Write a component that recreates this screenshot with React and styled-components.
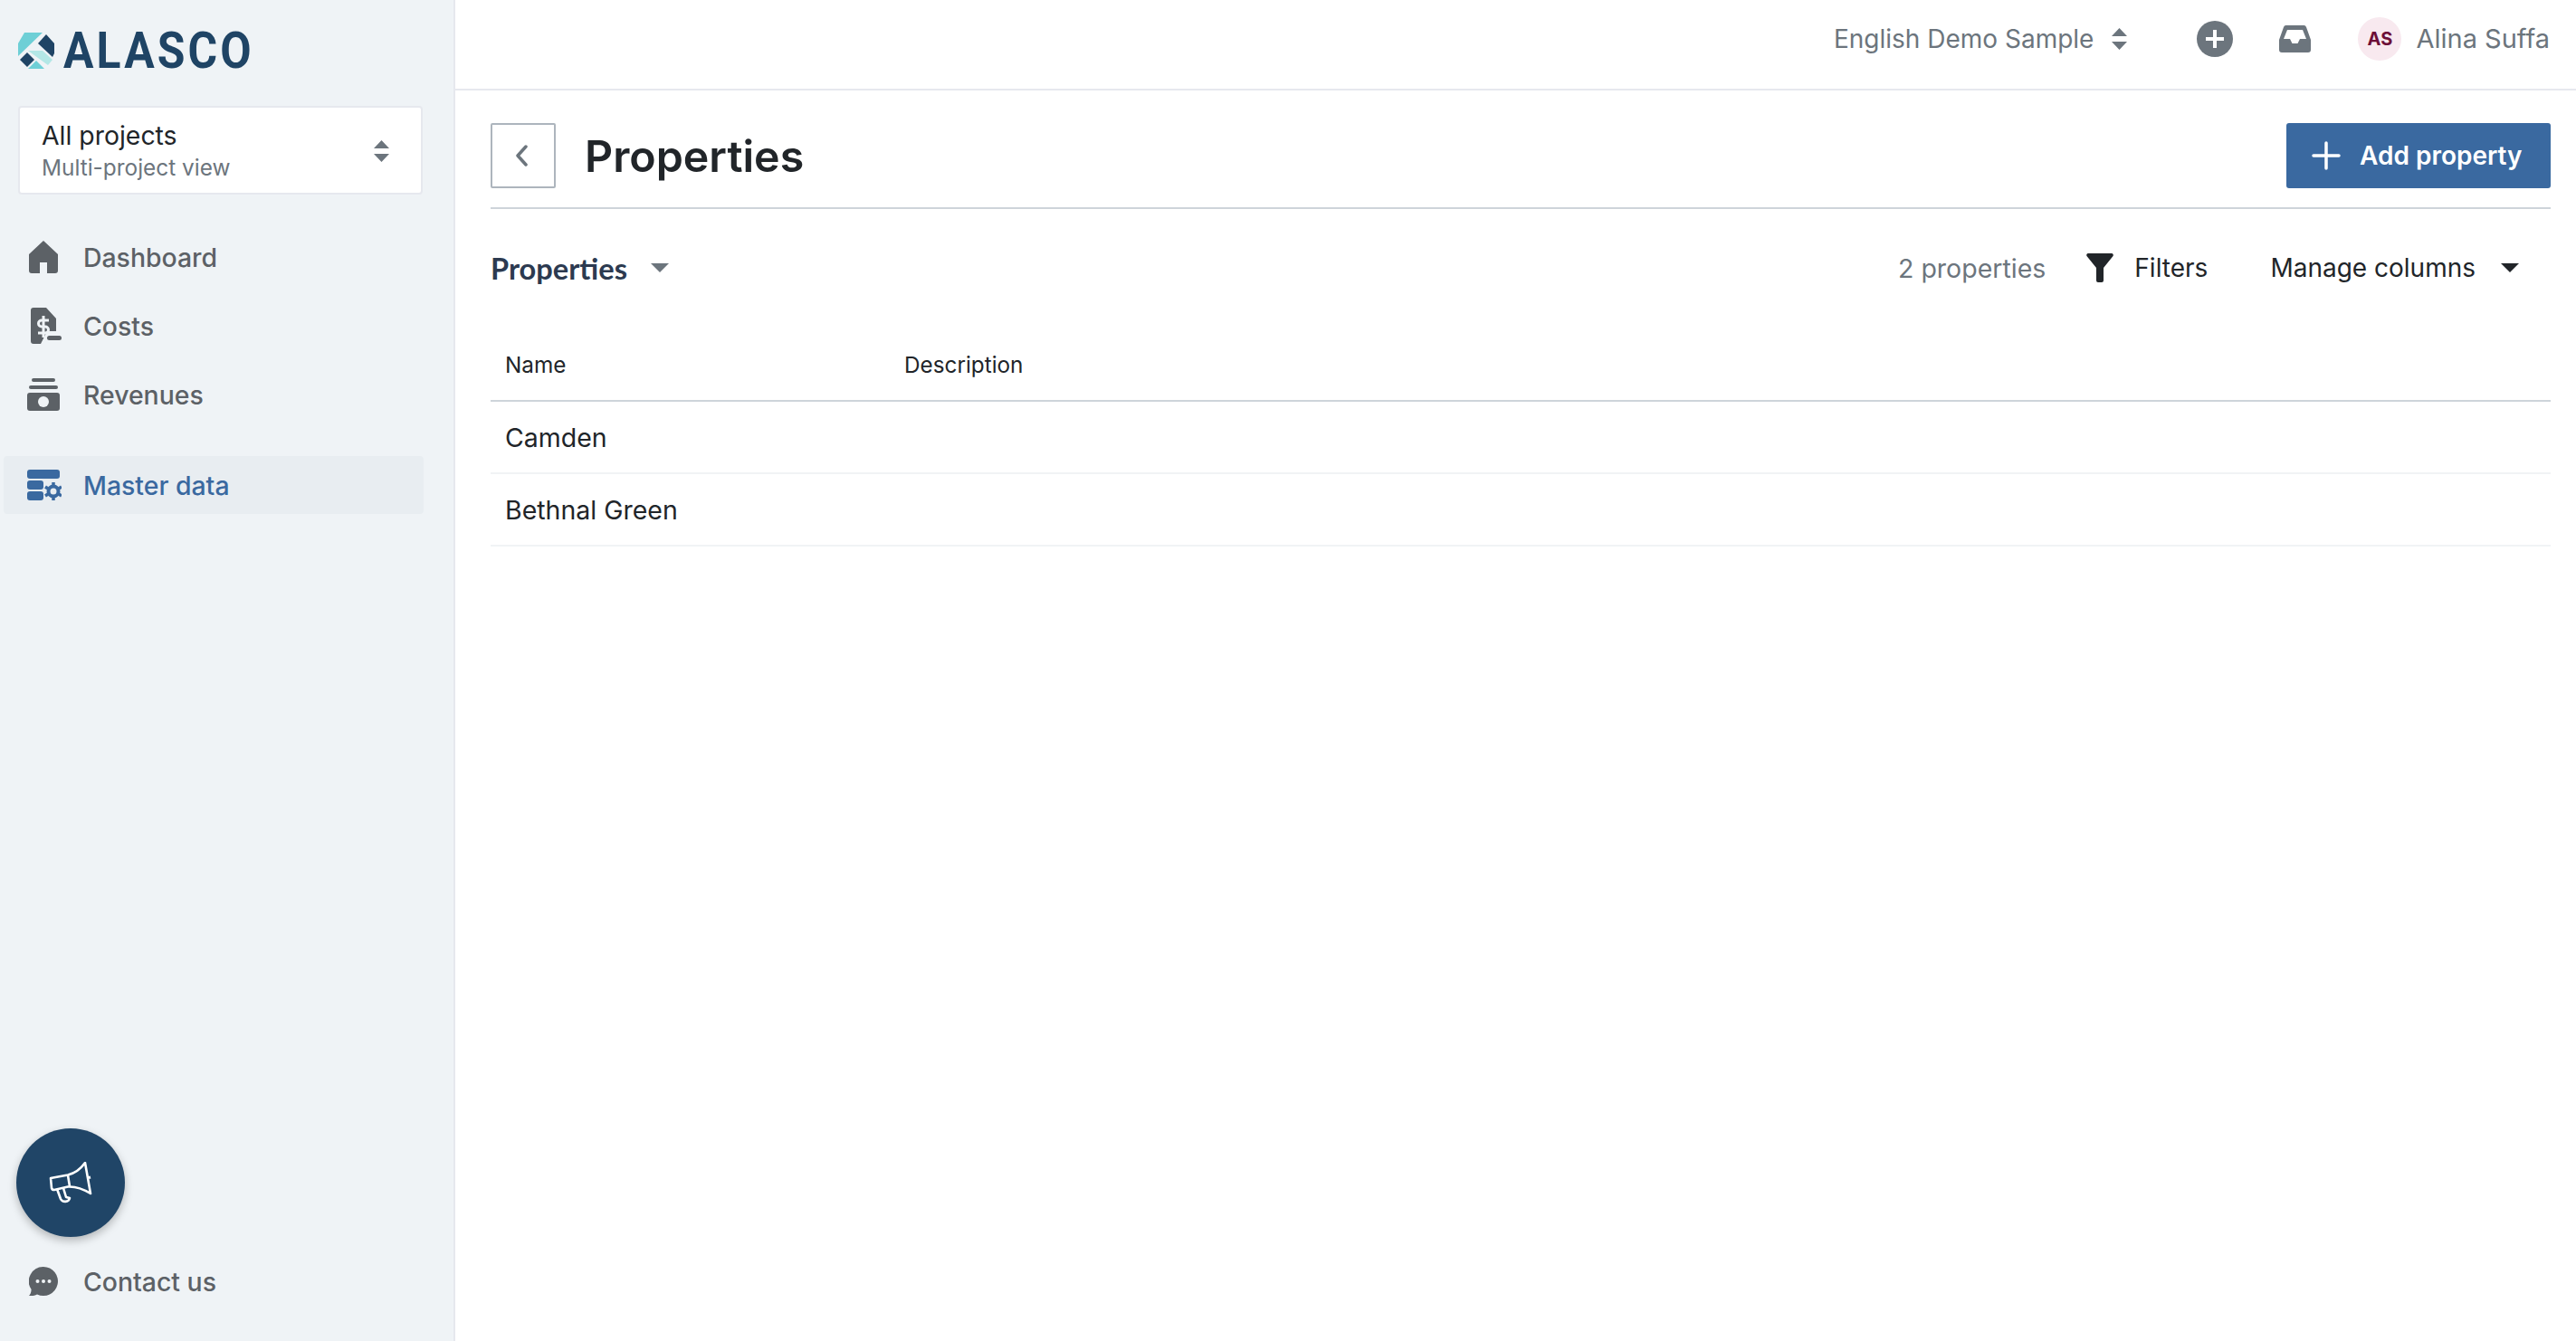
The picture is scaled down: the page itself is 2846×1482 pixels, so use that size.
import React from "react";
import styled, { createGlobalStyle } from "styled-components";

const GlobalStyle = createGlobalStyle`
  html, body {
    margin: 0;
    padding: 0;
    background: #fff;
    font-family: Inter, "Liberation Sans", sans-serif;
  }
  * {
    box-sizing: border-box;
  }
`;

const Page = styled.div`
  display: flex;
  height: 1482px;
  overflow: hidden;
`;

const Sidebar = styled.aside`
  width: 503px;
  flex-shrink: 0;
  display: flex;
  flex-direction: column;
  padding: 36px 0 28px;
  background: #eff3f6;
  border-right: 2px solid #e6e8ee;
`;

const LogoRow = styled.div`
  display: flex;
  align-items: center;
  gap: 10px;
  height: 40px;
  padding-left: 20px;
`;

const LogoText = styled.span`
  font-family: Roboto, sans-serif;
  font-size: 56px;
  font-weight: 700;
  letter-spacing: 3.5px;
  line-height: 40px;
  color: #1f4465;
  transform: scaleX(0.89);
  transform-origin: left center;
`;

const ProjectSelect = styled.div`
  display: flex;
  align-items: center;
  justify-content: space-between;
  width: 447px;
  height: 98px;
  margin: 41px 0 0 20px;
  padding: 2px 35px 0 24px;
  background: #fff;
  border: 2px solid #e6e8ee;
  border-radius: 4px;
`;

const ProjectName = styled.div`
  font-size: 28.4px;
  line-height: 36px;
  color: #212529;
`;

const ProjectHint = styled.div`
  font-size: 24.4px;
  line-height: 34px;
  color: #6c757d;
`;

const NavList = styled.nav`
  display: flex;
  flex-direction: column;
  margin-top: ${(p) => p.$top}px;
`;

const NavItem = styled.a`
  display: flex;
  align-items: center;
  width: 464px;
  height: ${(p) => (p.$active ? "64px" : "76px")};
  margin: ${(p) => (p.$active ? "30px 0 0 4px" : "0 0 0 4px")};
  padding-left: 22px;
  border-radius: 4px;
  background: ${(p) => (p.$active ? "#e8edf1" : "transparent")};
  color: ${(p) => (p.$active ? "#3a69a0" : "#5c6166")};
  font-size: 28.4px;
  font-weight: 500;
`;

const NavIcon = styled.span`
  display: flex;
  align-items: center;
  justify-content: center;
  width: 44px;
  margin-right: 22px;
  flex-shrink: 0;
`;

const Spacer = styled.div`
  flex: 1;
`;

const Fab = styled.button`
  display: flex;
  align-items: center;
  justify-content: center;
  width: 120px;
  height: 120px;
  margin-left: 18px;
  padding: 0;
  border: none;
  border-radius: 50%;
  background: #204567;
  box-shadow: 0 4px 10px rgba(0, 0, 0, 0.25);
`;

const Main = styled.main`
  flex: 1;
  display: flex;
  flex-direction: column;
  min-width: 0;
`;

const TopBar = styled.header`
  display: flex;
  align-items: center;
  justify-content: flex-end;
  height: 100px;
  padding: 0 29px 13px 0;
  border-bottom: 2px solid #e6e8ee;
  color: #6c757d;
  font-size: 29px;
`;

const ProjectLabel = styled.span`
  margin-right: 20px;
  font-size: 28px;
`;

const TopIcon = styled.span`
  display: flex;
  margin-left: ${(p) => p.$gap}px;
`;

const Avatar = styled.span`
  display: flex;
  align-items: center;
  justify-content: center;
  width: 48px;
  height: 48px;
  margin: 0 16px 0 52px;
  border-radius: 50%;
  background: #f8e9ef;
  color: #6d0f38;
  font-size: 20px;
  font-weight: 700;
`;

const Content = styled.div`
  padding: 36px 28px 0 39px;
`;

const TitleBar = styled.div`
  display: flex;
  align-items: center;
  height: 95px;
  padding-bottom: 21px;
  border-bottom: 2px solid #ced4da;
`;

const BackButton = styled.button`
  display: flex;
  align-items: center;
  justify-content: center;
  width: 72px;
  height: 72px;
  padding: 0 4px 0 0;
  background: #fff;
  border: 2px solid #adb5bd;
  border-radius: 2px;
`;

const Title = styled.h1`
  flex: 1;
  margin: 0 0 0 32px;
  font-size: 48.3px;
  font-weight: 600;
  color: #212529;
`;

const AddButton = styled.button`
  display: flex;
  align-items: center;
  gap: 21px;
  width: 292px;
  height: 72px;
  padding: 0 0 0 28px;
  border: none;
  border-radius: 3px;
  background: #3a69a0;
  color: #fff;
  font-family: inherit;
  font-size: 28px;
  font-weight: 600;
`;

const Toolbar = styled.div`
  display: flex;
  align-items: center;
  height: 84px;
  margin-top: 23px;
  padding-right: 35px;
`;

const ViewName = styled.span`
  font-family: Lato, sans-serif;
  font-size: 32.6px;
  font-weight: 700;
  color: #2c3a50;
`;

const Caret = styled.span`
  width: 0;
  height: 0;
  margin-left: ${(p) => p.$gap}px;
  border-left: 10px solid transparent;
  border-right: 10px solid transparent;
  border-top: 10px solid ${(p) => p.$color};
`;

const Count = styled.span`
  margin-left: auto;
  font-size: 28.5px;
  color: #6c757d;
`;

const ToolLabel = styled.span`
  margin-left: ${(p) => p.$gap}px;
  font-size: 28px;
  color: #212529;
`;

const FilterIcon = styled.span`
  display: flex;
  margin-left: 45px;
`;

const Table = styled.table`
  width: 100%;
  margin-top: 21px;
  border-collapse: collapse;
  table-layout: fixed;
`;

const HeadCell = styled.th`
  width: ${(p) => p.$width || "auto"};
  height: 84px;
  padding: 4px 0 0 16px;
  border-bottom: 2px solid #ced4da;
  font-size: 24.3px;
  font-weight: 400;
  text-align: left;
  color: #212529;
`;

const Cell = styled.td`
  height: 80px;
  padding: 0 0 0 16px;
  border-bottom: 2px solid #f1f3f5;
  font-size: 28.5px;
  color: #212529;
`;

const LogoMark = () => (
  <svg width="40" height="40" viewBox="0 0 40 40">
    <path d="M7 0H27L0 26V12Z" fill="#6ecfd6" />
    <path d="M22 12L31 2L40 12V23L38 27Z" fill="#1f4465" />
    <path d="M11 20H27L38 30L33 36Z" fill="#b3e7e6" />
    <path d="M10 22L18 30L10 38L2 30Z" fill="#1f4465" />
    <path d="M20 31L29 40H11Z" fill="#6ecfd6" />
  </svg>
);

const SortIcon = ({ color = "#6c757d" }) => (
  <svg width="17" height="24" viewBox="0 0 17 24">
    <path d="M8.5 0L17 9H0Z M0 15H17L8.5 24Z" fill={color} />
  </svg>
);

const HomeIcon = () => (
  <svg width="32" height="36" viewBox="0 0 32 36">
    <path
      d="M16 0L32 15V33a3 3 0 0 1-3 3H20V24H12V36H3a3 3 0 0 1-3-3V15Z"
      fill="currentColor"
    />
  </svg>
);

const CostIcon = () => (
  <svg width="40" height="40" viewBox="-6 0 40 40">
    <path
      d="M3 0H17L28 12V26H18L11 40H3a3 3 0 0 1-3-3V3a3 3 0 0 1 3-3Z"
      fill="currentColor"
    />
    <path
      d="M20 14H12a3.5 3.5 0 0 0 0 7H16a3.5 3.5 0 0 1 0 7H8M14 9V33"
      fill="none"
      stroke="#eff3f6"
      strokeWidth="3"
    />
    <rect x="18" y="31" width="16" height="5" rx="2.5" fill="currentColor" />
  </svg>
);

const RevenueIcon = () => (
  <svg width="36" height="36" viewBox="0 0 36 36">
    <rect x="5" y="0" width="26" height="4" rx="2" fill="currentColor" />
    <rect x="2" y="8" width="32" height="4" rx="2" fill="currentColor" />
    <rect x="0" y="16" width="36" height="20" rx="3" fill="currentColor" />
    <circle cx="18" cy="26" r="6" fill="#eff3f6" />
  </svg>
);

const MasterIcon = () => (
  <svg width="40" height="34" viewBox="-2 0 40 34">
    <rect x="0" y="0" width="36" height="10" rx="3" fill="currentColor" />
    <rect x="0" y="12" width="18" height="10" rx="3" fill="currentColor" />
    <rect x="0" y="24" width="18" height="10" rx="3" fill="currentColor" />
    <circle
      cx="29"
      cy="24"
      r="5.5"
      fill="none"
      stroke="currentColor"
      strokeWidth="4"
    />
    <path
      d="M29 14V17M29 31V34M20 19L23 21M35 27L38 29M20 29L23 27M35 21L38 19"
      stroke="currentColor"
      strokeWidth="3.5"
    />
  </svg>
);

const ChatIcon = () => (
  <svg width="32" height="32" viewBox="0 0 32 32">
    <path
      d="M16 0a16 16 0 1 1-7 30.4C6 32 3 32 0 32c1.5-1.5 2.5-3.5 2.6-7A16 16 0 0 1 16 0Z"
      fill="currentColor"
    />
    <circle cx="9.5" cy="16" r="2" fill="#eff3f6" />
    <circle cx="16" cy="16" r="2" fill="#eff3f6" />
    <circle cx="22.5" cy="16" r="2" fill="#eff3f6" />
  </svg>
);

const MegaphoneIcon = () => (
  <svg width="48" height="46" viewBox="0 0 48 46" fill="none">
    <path
      d="M2 18L21 14.5C29 12.5 35 8 40 1L46 35C38 30 30 27 21 27.5L6 31C4 31.3 3.5 30.5 3 29Z"
      stroke="#fff"
      strokeWidth="2.6"
      strokeLinejoin="round"
    />
    <path d="M21 15L23 27" stroke="#fff" strokeWidth="2.6" />
    <path
      d="M9 30L13 41C15 45 22 45 23 40L19 39L16 29"
      stroke="#fff"
      strokeWidth="2.6"
      strokeLinejoin="round"
    />
    <path d="M44 17.5L46 17" stroke="#fff" strokeWidth="3" />
  </svg>
);

const PlusCircleIcon = () => (
  <svg width="40" height="40" viewBox="0 0 40 40">
    <circle cx="20" cy="20" r="20" fill="#6c757d" />
    <path d="M20 10V30M10 20H30" stroke="#fff" strokeWidth="4" />
  </svg>
);

const InboxIcon = () => (
  <svg width="35" height="30" viewBox="0 0 35 30">
    <path
      d="M8 0H27a3 3 0 0 1 3 2L35 16V27a3 3 0 0 1-3 3H3a3 3 0 0 1-3-3V16L5 2a3 3 0 0 1 3-2Z"
      fill="#6c757d"
    />
    <path d="M9 5H26L30 15H23L20.5 20H14.5L12 15H5Z" fill="#fff" />
  </svg>
);

const PlusIcon = () => (
  <svg width="32" height="32" viewBox="0 0 32 32">
    <path
      d="M16 2V30M2 16H30"
      stroke="#fff"
      strokeWidth="3.5"
      strokeLinecap="round"
    />
  </svg>
);

const ChevronLeftIcon = () => (
  <svg width="14" height="24" viewBox="0 0 14 24" fill="none">
    <path
      d="M12 2L3 12L12 22"
      stroke="#6c757d"
      strokeWidth="3.5"
      strokeLinecap="round"
      strokeLinejoin="round"
    />
  </svg>
);

const FunnelIcon = () => (
  <svg width="30" height="32" viewBox="0 0 30 32">
    <path
      d="M2 0H28a2 2 0 0 1 1.5 3L19 16V30a2 2 0 0 1-2 2H13a2 2 0 0 1-2-2V16L.5 3A2 2 0 0 1 2 0Z"
      fill="#212529"
    />
  </svg>
);

const navItems = [
  { label: "Dashboard", icon: <HomeIcon /> },
  { label: "Costs", icon: <CostIcon /> },
  { label: "Revenues", icon: <RevenueIcon /> },
];

const properties = ["Camden", "Bethnal Green"];

export default function App() {
  return (
    <Page>
      <GlobalStyle />
      <Sidebar>
        <LogoRow>
          <LogoMark />
          <LogoText>ALASCO</LogoText>
        </LogoRow>
        <ProjectSelect>
          <div>
            <ProjectName>All projects</ProjectName>
            <ProjectHint>Multi-project view</ProjectHint>
          </div>
          <SortIcon />
        </ProjectSelect>
        <NavList $top={31}>
          {navItems.map(({ label, icon }) => (
            <NavItem key={label}>
              <NavIcon>{icon}</NavIcon>
              {label}
            </NavItem>
          ))}
          <NavItem $active>
            <NavIcon>
              <MasterIcon />
            </NavIcon>
            Master data
          </NavItem>
        </NavList>
        <Spacer />
        <Fab>
          <MegaphoneIcon />
        </Fab>
        <NavList $top={11}>
          <NavItem>
            <NavIcon>
              <ChatIcon />
            </NavIcon>
            Contact us
          </NavItem>
        </NavList>
      </Sidebar>
      <Main>
        <TopBar>
          <ProjectLabel>English Demo Sample</ProjectLabel>
          <SortIcon />
          <TopIcon $gap={77}>
            <PlusCircleIcon />
          </TopIcon>
          <TopIcon $gap={51}>
            <InboxIcon />
          </TopIcon>
          <Avatar>AS</Avatar>
          Alina Suffa
        </TopBar>
        <Content>
          <TitleBar>
            <BackButton>
              <ChevronLeftIcon />
            </BackButton>
            <Title>Properties</Title>
            <AddButton>
              <PlusIcon />
              Add property
            </AddButton>
          </TitleBar>
          <Toolbar>
            <ViewName>Properties</ViewName>
            <Caret $gap={26} $color="#6c757d" />
            <Count>2 properties</Count>
            <FilterIcon>
              <FunnelIcon />
            </FilterIcon>
            <ToolLabel $gap={23}>Filters</ToolLabel>
            <ToolLabel $gap={69}>Manage columns</ToolLabel>
            <Caret $gap={28} $color="#212529" />
          </Toolbar>
          <Table>
            <thead>
              <tr>
                <HeadCell $width="441px">Name</HeadCell>
                <HeadCell>Description</HeadCell>
              </tr>
            </thead>
            <tbody>
              {properties.map((name) => (
                <tr key={name}>
                  <Cell>{name}</Cell>
                  <Cell />
                </tr>
              ))}
            </tbody>
          </Table>
        </Content>
      </Main>
    </Page>
  );
}
